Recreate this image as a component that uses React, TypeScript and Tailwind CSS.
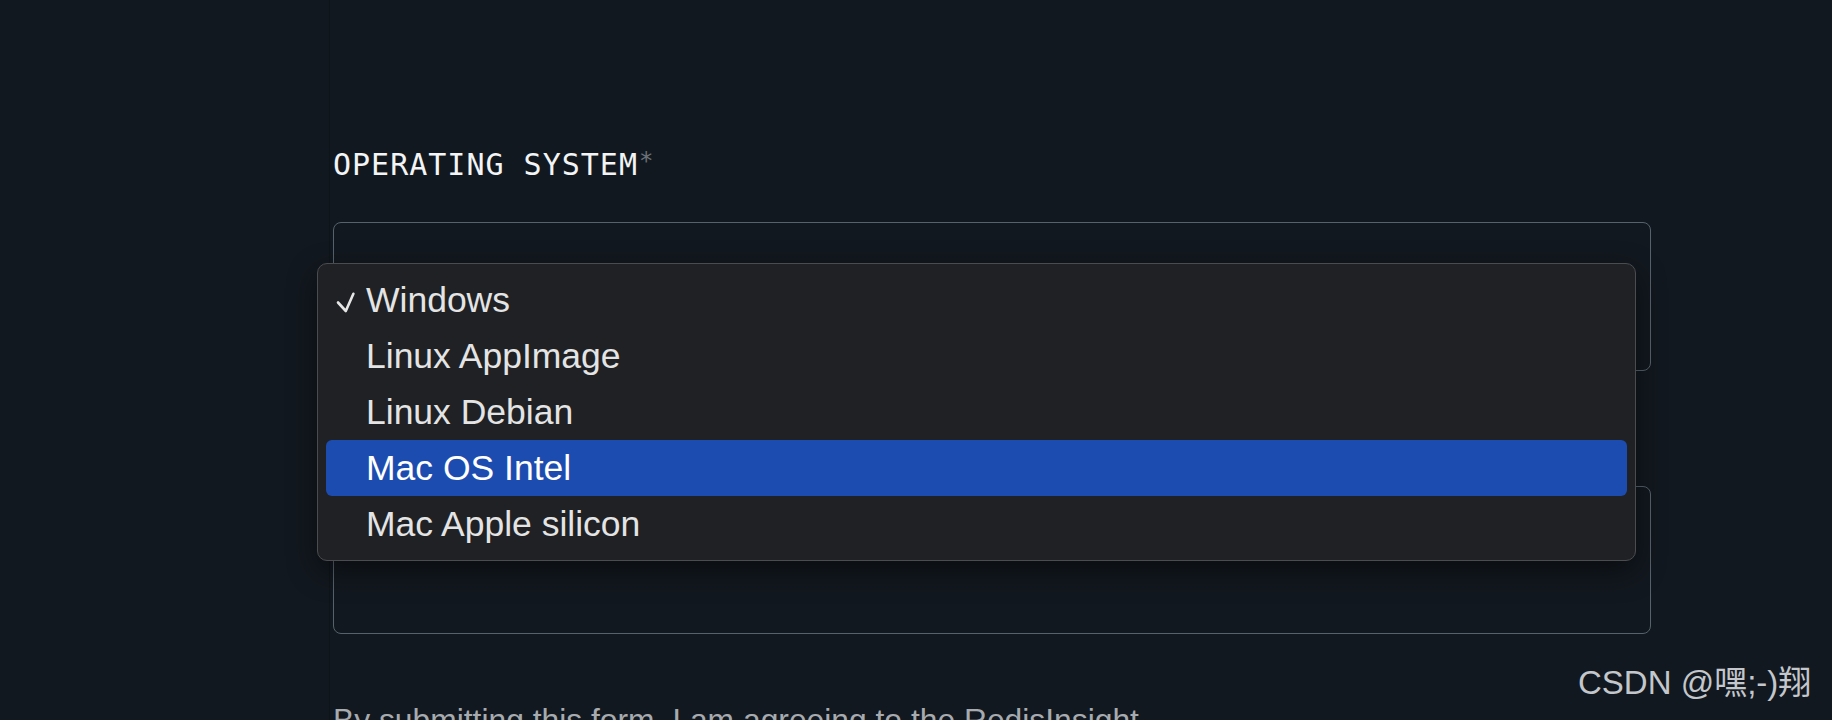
import React, { useState } from "react";

const options = [
  "Windows",
  "Linux AppImage",
  "Linux Debian",
  "Mac OS Intel",
  "Mac Apple silicon",
];

const Check = () => (
  <svg
    width="20"
    height="21"
    viewBox="0 0 20 21"
    fill="none"
    stroke="#e6e6e6"
    strokeWidth="2.6"
    strokeLinecap="round"
    strokeLinejoin="round"
    className="mt-[4px]"
  >
    <polyline points="2,10.5 9.8,19 17.4,1.8" />
  </svg>
);

const OsMenu: React.FC<{ selected: string; active: string }> = ({
  selected,
  active,
}) => (
  <div className="absolute left-[-16px] top-[41px] z-10 w-[1319px] rounded-[10px] border border-[#4a4c50] bg-[#1f2124] p-2 shadow-[0_10px_30px_rgba(0,0,0,0.45)]">
    {options.map((opt) => (
      <div
        key={opt}
        className={`${
          opt === active ? "bg-[#1d4cb0] text-white" : "text-[#e4e4e4]"
        } flex h-[56px] items-center rounded-[6px]`}
      >
        <div className="flex w-[40px] items-center pl-[10px]">
          {opt === selected && <Check />}
        </div>
        <span className="font-['Liberation_Sans',Arial,sans-serif] text-[35.5px] leading-[56px]">
          {opt}
        </span>
      </div>
    ))}
  </div>
);

export default function App() {
  const [selected] = useState("Windows");

  return (
    <div className="relative flex h-[720px] w-full overflow-hidden bg-[#12181f]">
      <div className="w-[329px] shrink-0" />
      <div className="flex-1 border-l border-[#0e1419] pl-[3px]">
        <div className="w-[1318px] pt-[149px]">
          <div className="flex items-start font-['DejaVu_Sans_Mono',monospace] text-[30px] leading-[32px] tracking-[1px] text-[#f2f4f5]">
            <span>OPERATING SYSTEM</span>
            <span className="ml-[1px] text-[24px] leading-[24px] text-[#6b7178]">
              *
            </span>
          </div>

          <div className="relative mt-[41px]">
            <div className="h-[149px] rounded-lg border border-[#56616b]" />
            <OsMenu selected={selected} active="Mac OS Intel" />
          </div>

          <div className="mt-[115px] h-[148px] rounded-lg border border-[#56616b]" />

          <p className="mt-[66px] whitespace-nowrap font-['Liberation_Sans',Arial,sans-serif] text-[31.8px] leading-[40px] text-[#a7abaf]">
            By submitting this form, I am agreeing to the RedisInsight
          </p>
        </div>
      </div>

      <div className="absolute left-[1578px] top-[664px] whitespace-nowrap font-['Liberation_Sans','Noto_Sans_CJK_SC',sans-serif] text-[33px] leading-[38px] text-[#c3c7cb]">
        CSDN @嘿;-)翔
      </div>
    </div>
  );
}
